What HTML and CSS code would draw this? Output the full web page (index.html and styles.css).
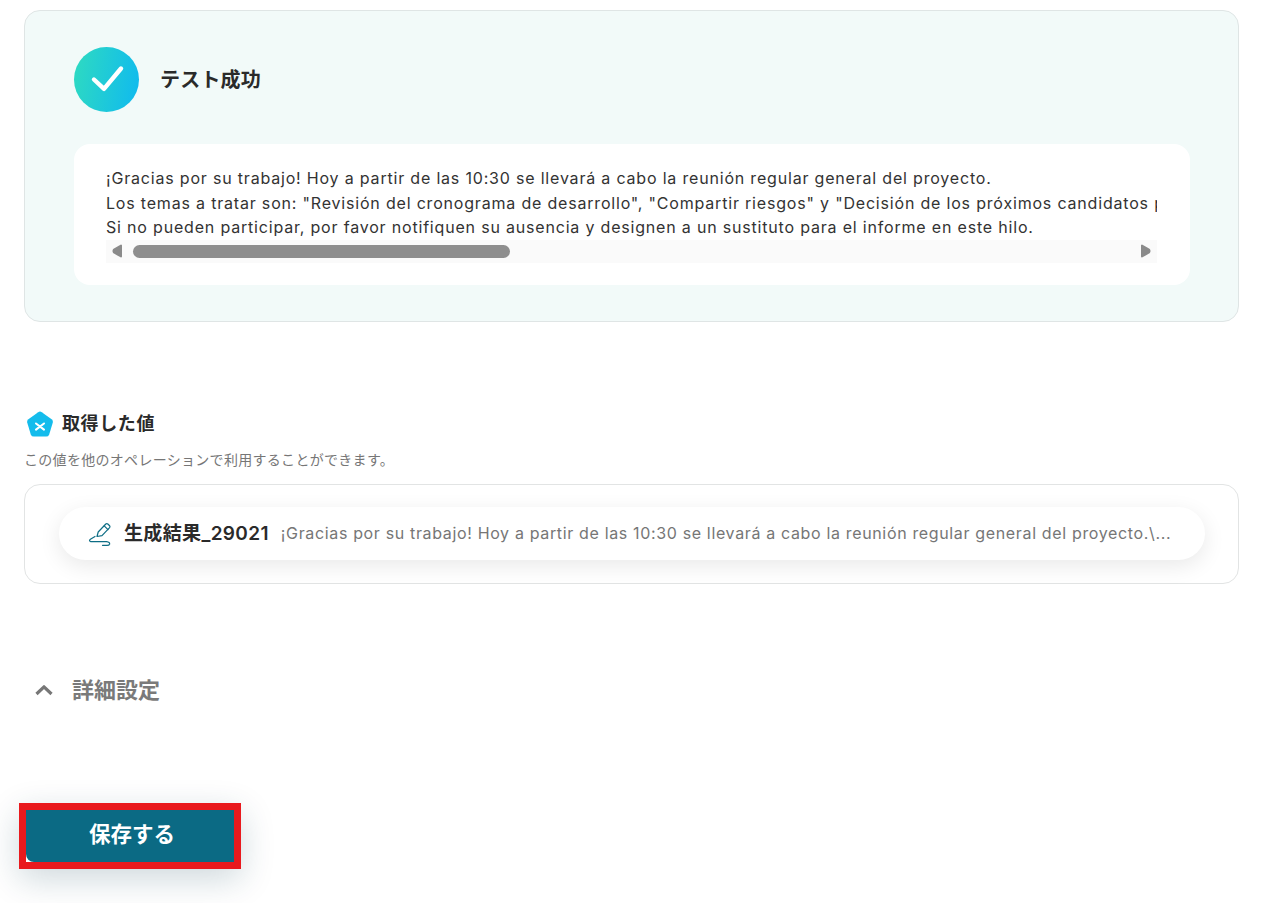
FILE: index.html
```html
<!DOCTYPE html>
<html lang="ja">
<head>
<meta charset="utf-8">
<title>テスト成功</title>
<link rel="stylesheet" href="styles.css">
</head>
<body>
<main class="page">
  <section class="result-panel">
    <div class="result-head">
      <span class="check-badge">
        <svg width="65" height="65" viewBox="0 0 65 65" fill="none"><path d="M20 32.5L30 41.8L47 21.5" stroke="#fff" stroke-width="4.4" stroke-linecap="round" stroke-linejoin="round"/></svg>
      </span>
      <h1 class="result-title">テスト成功</h1>
    </div>
    <div class="output-card">
      <div class="output-text">
        <p>¡Gracias por su trabajo! Hoy a partir de las 10:30 se llevará a cabo la reunión regular general del proyecto.</p>
        <p>Los temas a tratar son: "Revisión del cronograma de desarrollo", "Compartir riesgos" y "Decisión de los próximos candidatos para la siguiente versión".</p>
        <p>Si no pueden participar, por favor notifiquen su ausencia y designen a un sustituto para el informe en este hilo.</p>
      </div>
      <div class="scrollbar">
        <svg class="arrow" width="12" height="16" viewBox="0 0 12 16"><path d="M10 2.5V13.5L3 9.5Q2 8 3 6.5Z" fill="#8a8a8a" stroke="#8a8a8a" stroke-width="2" stroke-linejoin="round"/></svg>
        <span class="thumb"></span>
        <svg class="arrow arrow-right" width="12" height="16" viewBox="0 0 12 16"><path d="M2 2.5V13.5L9 9.5Q10 8 9 6.5Z" fill="#8a8a8a" stroke="#8a8a8a" stroke-width="2" stroke-linejoin="round"/></svg>
      </div>
    </div>
  </section>

  <section class="values">
    <div class="values-head">
      <svg class="values-icon" width="28" height="27" viewBox="0 0 28 27"><path d="M12.2 1.2Q14 0 15.8 1.2L25.6 8.2Q27.4 9.6 26.8 11.6L23.2 23.4Q22.4 25.6 20.2 25.6H7.8Q5.6 25.6 4.8 23.4L1.2 11.6Q.6 9.6 2.4 8.2Z" fill="#14bcec"/><path d="M10 12.5L18 18.6M18 12.5L10 18.6" stroke="#fff" stroke-width="2.1" stroke-linecap="round"/></svg>
      <h2 class="values-title">取得した値</h2>
    </div>
    <p class="values-note">この値を他のオペレーションで利用することができます。</p>
    <div class="values-box">
      <div class="value-pill">
        <svg class="pen" width="24" height="24" viewBox="0 0 24 24" fill="none" stroke="#0d6d85" stroke-width="1.2" stroke-linecap="round" stroke-linejoin="round"><path d="M9 14.5L10.2 10L17.8 2Q18.8 1.2 19.8 2L21.6 3.7Q22.4 4.7 21.6 5.7L14 13.6Z"/><path d="M16.2 3.8L20 7.6"/><path d="M7 14.5L2.8 17Q0.2 18.8 2.8 19.6H18.6Q22 20.2 21.6 22.2Q21 23.6 18 23.3H14.5"/></svg>
        <span class="value-name">生成結果_29021</span>
        <span class="value-text">¡Gracias por su trabajo! Hoy a partir de las 10:30 se llevará a cabo la reunión regular general del proyecto.\...</span>
      </div>
    </div>
  </section>

  <section class="details">
    <svg width="20" height="12" viewBox="0 0 20 12" fill="none"><path d="M2.5 10L10 2.8L17.5 10" stroke="#777" stroke-width="3.2" stroke-linejoin="round"/></svg>
    <h2 class="details-title">詳細設定</h2>
  </section>

  <div class="save-frame">
    <button class="save-button" type="button">保存する</button>
  </div>
</main>
</body>
</html>
```

FILE: styles.css
```css
* { box-sizing: border-box; }
html, body { margin: 0; padding: 0; }
body {
  background: #fff;
  color: #222;
  font-family: Inter, "Noto Sans CJK JP", "Noto Sans", sans-serif;
  height: 903px;
  overflow: hidden;
}
h1, h2, p { margin: 0; }
.page { padding: 10px 25px 0 24px; }

.result-panel {
  height: 312px;
  background: #f2faf9;
  border: 1px solid #dfe5e5;
  border-radius: 16px;
  padding: 36px 48px 0 49px;
}
.result-head { display: flex; align-items: center; gap: 21px; height: 65px; }
.check-badge {
  width: 65px; height: 65px; border-radius: 50%;
  background: linear-gradient(100deg, #2fdbc0, #0fb9f0);
  display: block; flex: none;
}
.check-badge svg { display: block; }
.result-title { font-size: 20px; font-weight: 600; line-height: 30px; letter-spacing: 0.2px; color: #2a2a2a; }

.output-card {
  margin-top: 32px;
  height: 141px;
  background: #fff;
  border-radius: 16px;
  padding: 22px 33px 0 32px;
}
.output-text {
  overflow: hidden;
  white-space: nowrap;
  font-size: 16px;
  line-height: 24.5px;
  letter-spacing: 0.81px;
  color: #333;
}
.scrollbar {
  height: 23px;
  background: #fafafa;
  display: flex;
  align-items: center;
  padding: 0 5px;
}
.arrow { flex: none; display: block; }
.thumb {
  width: 377px; height: 13px; border-radius: 7px;
  background: #8e8e8e; margin-left: 10px;
}
.arrow-right { margin-left: auto; }

.values { margin-top: 88px; }
.values-head { display: flex; align-items: center; gap: 8px; height: 28px; padding-left: 2px; }
.values-icon { flex: none; display: block; }
.values-title { font-size: 18px; font-weight: 600; line-height: 28px; letter-spacing: 0.6px; color: #2a2a2a; }
.values-note { margin-top: 11px; font-size: 14px; line-height: 21px; letter-spacing: 0.3px; color: #767676; }
.values-box {
  margin-top: 14px;
  height: 100px;
  border: 1px solid #e2e4e4;
  border-radius: 16px;
  padding: 22px 33px 0 34px;
}
.value-pill {
  height: 53px;
  border-radius: 27px;
  background: #fff;
  box-shadow: 0 6px 22px rgba(0, 0, 0, 0.09);
  display: flex;
  align-items: center;
  padding: 0 32px 0 29px;
}
.pen { flex: none; display: block; }
.value-name { margin-left: 12px; font-size: 19px; font-weight: 600; line-height: 28px; letter-spacing: 0.35px; color: #2a2a2a; white-space: nowrap; }
.value-text { margin-left: 12px; padding-bottom: 2px; font-size: 16px; letter-spacing: 0.65px; line-height: 24px; color: #767676; white-space: nowrap; overflow: hidden; }

.details { margin-top: 90px; height: 32px; display: flex; align-items: center; gap: 18px; padding-left: 10px; }
.details svg { display: block; }
.details-title { font-size: 22px; font-weight: 600; line-height: 32px; color: #7a7a7a; }

.save-frame {
  margin-top: 97px;
  margin-left: -5px;
  width: 222px;
  height: 66px;
  border: 7.5px solid #e9191d;
  background: #fff;
  box-shadow: 0 10px 34px rgba(12, 60, 80, 0.2);
}
.save-button {
  display: block; width: 100%; height: 100%;
  border: 0; padding: 0 0 8px 4px;
  background: #0b6a84;
  border-radius: 0 0 0 8px;
  color: #fff;
  font-family: inherit; font-size: 21.5px; font-weight: 700;
}
```
